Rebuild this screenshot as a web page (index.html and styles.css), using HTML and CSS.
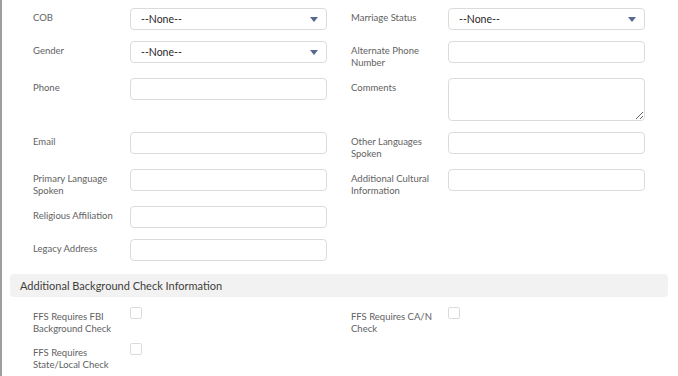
FILE: index.html
```html
<!DOCTYPE html>
<html lang="en">
<head>
    <meta charset="UTF-8">
    <meta name="viewport" content="width=device-width, initial-scale=1.0">
    <title>Contact Details</title>
    <link rel="stylesheet" href="styles.css">
</head>
<body>
    <div class="page">
        <div class="form-grid">
            <div class="item">
                <label class="lbl">COB</label>
                <div class="picklist"><span>--None--</span><svg width="8" height="5" viewBox="0 0 8 5"><path d="M0 0h8L4 5z" fill="#54698d"/></svg></div>
            </div>
            <div class="item">
                <label class="lbl">Marriage Status</label>
                <div class="picklist"><span>--None--</span><svg width="8" height="5" viewBox="0 0 8 5"><path d="M0 0h8L4 5z" fill="#54698d"/></svg></div>
            </div>

            <div class="item">
                <label class="lbl">Gender</label>
                <div class="picklist"><span>--None--</span><svg width="8" height="5" viewBox="0 0 8 5"><path d="M0 0h8L4 5z" fill="#54698d"/></svg></div>
            </div>
            <div class="item">
                <label class="lbl">Alternate Phone Number</label>
                <input class="txt" type="text">
            </div>

            <div class="item">
                <label class="lbl">Phone</label>
                <input class="txt" type="text">
            </div>
            <div class="item">
                <label class="lbl">Comments</label>
                <textarea class="area"></textarea>
            </div>

            <div class="item">
                <label class="lbl">Email</label>
                <input class="txt" type="text">
            </div>
            <div class="item">
                <label class="lbl">Other Languages Spoken</label>
                <input class="txt" type="text">
            </div>

            <div class="item">
                <label class="lbl">Primary Language Spoken</label>
                <input class="txt" type="text">
            </div>
            <div class="item">
                <label class="lbl">Additional Cultural Information</label>
                <input class="txt" type="text">
            </div>

            <div class="item">
                <label class="lbl">Religious Affiliation</label>
                <input class="txt" type="text">
            </div>
            <div class="item"></div>

            <div class="item">
                <label class="lbl">Legacy Address</label>
                <input class="txt" type="text">
            </div>
            <div class="item"></div>
        </div>

        <div class="section-head">Additional Background Check Information</div>

        <div class="form-grid checks">
            <div class="item">
                <label class="lbl">FFS Requires FBI Background Check</label>
                <span class="box"></span>
            </div>
            <div class="item">
                <label class="lbl">FFS Requires CA/N Check</label>
                <span class="box"></span>
            </div>
            <div class="item">
                <label class="lbl">FFS Requires State/Local Check</label>
                <span class="box"></span>
            </div>
            <div class="item"></div>
        </div>
    </div>
</body>
</html>
```

FILE: styles.css
```css
body {
    margin: 0;
    font-family: Lato, "Open Sans", sans-serif;
    background-color: #fff;
    color: #3e3e3c;
}
.page {
    min-height: 376px;
    box-sizing: border-box;
    border-left: 2px solid #9e9e9e;
    padding: 8px 10px 0 8px;
}
.form-grid {
    display: grid;
    grid-template-columns: 318px 318px;
    row-gap: 11px;
    padding-left: 23px;
}
.item {
    display: flex;
    align-items: flex-start;
}
.lbl {
    width: 97px;
    padding-top: 4px;
    margin-bottom: -2px;
    padding-right: 12px;
    box-sizing: border-box;
    font-size: 9.5px;
    line-height: 12px;
    color: #626262;
}
.picklist, .txt, .area {
    width: 197px;
    height: 22px;
    box-sizing: border-box;
    border: 1px solid #dddbda;
    border-radius: 4px;
    background: #fff;
    margin: 0;
}
.picklist {
    display: flex;
    align-items: center;
    justify-content: space-between;
    padding: 0 8px 0 10px;
    font-size: 10.5px;
    color: #2b2826;
}
.picklist svg {
    margin-top: 1px;
}
.txt {
    padding: 0 8px;
    font-family: inherit;
}
.area {
    height: 43px;
    padding: 4px 8px;
    font-family: inherit;
    resize: vertical;
}
.section-head {
    margin-top: 13px;
    height: 23px;
    padding-left: 10px;
    display: flex;
    align-items: center;
    background-color: #f3f2f2;
    border-radius: 4px;
    font-size: 11px;
    color: #3e3e3c;
}
.checks {
    margin-top: 10px;
    row-gap: 10px;
}
.box {
    width: 12px;
    height: 12px;
    box-sizing: border-box;
    border: 1px solid #dddbda;
    border-radius: 2px;
    background: #fff;
}
```
